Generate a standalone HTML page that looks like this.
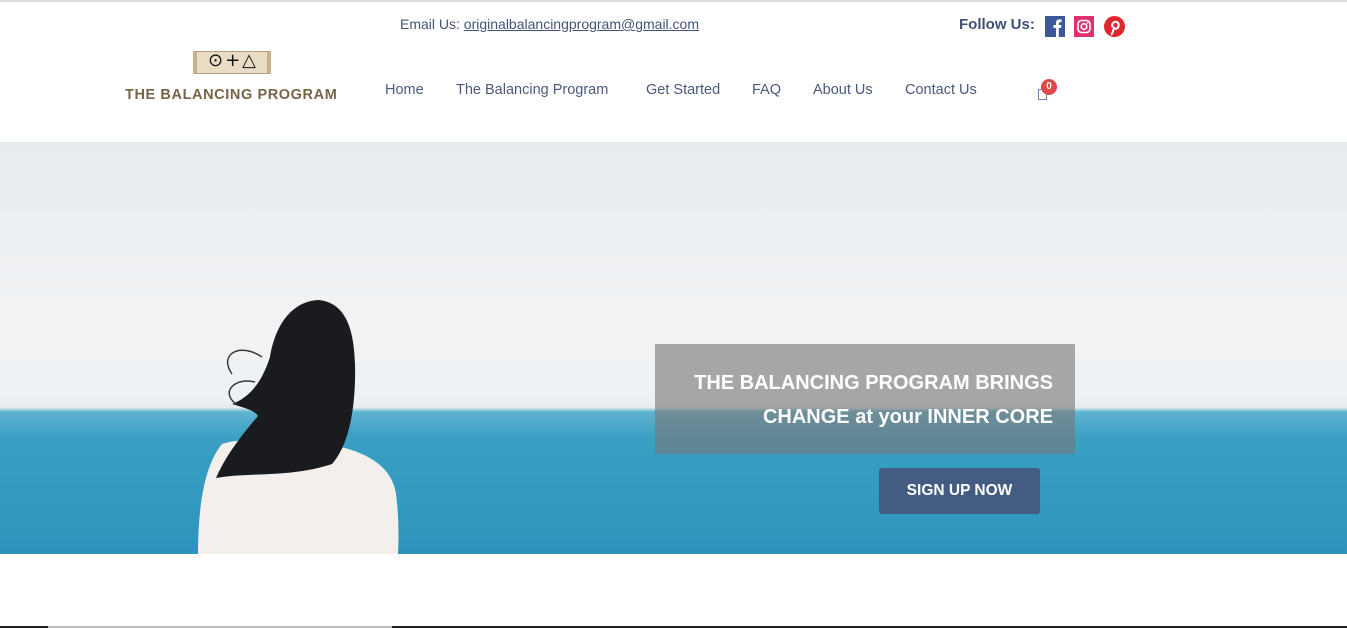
<!DOCTYPE html>
<html><head><meta charset="utf-8"><style>
*{margin:0;padding:0;box-sizing:border-box}
body{width:1347px;height:628px;overflow:hidden;background:#fff;font-family:"Liberation Sans",sans-serif;position:relative}
.a{position:absolute}
.nav{font-size:14.5px;color:#4a5a7c;top:82px;font-weight:300}
</style></head><body>
<div class="a" style="left:0;top:0;width:1347px;height:2px;background:#ddd"></div>
<div class="a" style="left:400px;top:16px;font-size:14px;color:#44557a">Email Us: <span style="text-decoration:underline">originalbalancingprogram@gmail.com</span></div>
<div class="a" style="left:959px;top:16px;font-size:15px;font-weight:bold;color:#3f4f72">Follow Us:</div>
<svg class="a" style="left:1045px;top:16px" width="20" height="21" viewBox="0 0 20 21"><rect width="20" height="21" fill="#3b5998"/><path d="M11 21V12H8.5V9H11V7c0-2.5 1.3-3.6 3.6-3.6H16.5V6.3H15c-.9 0-1.2.4-1.2 1.2V9H16.5L16 12H13.8V21z" fill="#fff"/></svg>
<svg class="a" style="left:1074px;top:16px" width="20" height="21" viewBox="0 0 20 21"><rect width="20" height="21" fill="#e0306f"/><rect x="4" y="4.5" width="12" height="12" rx="3.5" fill="none" stroke="#fff" stroke-width="1.6"/><circle cx="10" cy="10.5" r="2.8" fill="none" stroke="#fff" stroke-width="1.6"/><circle cx="13.6" cy="6.9" r=".8" fill="#fff"/></svg>
<svg class="a" style="left:1104px;top:16px" width="21" height="21" viewBox="0 0 21 21"><circle cx="10.5" cy="10.5" r="10.5" fill="#e0262c"/><path d="M9.6 13c-.5 2.3-1 4.1-2 5.3M8.2 10.5c-.8-3 2-5.3 4.3-4.6 2.6.7 2.8 4.4.9 6.2-1.4 1.3-3.2.6-3.5-.7" fill="none" stroke="#fff" stroke-width="2" stroke-linecap="round"/></svg>
<div class="a" style="left:193px;top:51px;width:78px;height:23px;background:#e9dcc4;border:1px solid #b59d7a;border-left:4px solid #c9b08a;border-right:4px solid #c9b08a"></div>
<div class="a" style="left:198px;top:50px;width:70px;font-size:18px;color:#111;font-family:'DejaVu Sans',sans-serif;text-align:center;letter-spacing:2px">⊙+△</div>
<div class="a" style="left:125px;top:87px;font-size:14.5px;font-weight:bold;color:#766448;letter-spacing:.6px">THE BALANCING PROGRAM</div>
<div class="a nav" style="left:385px">Home</div>
<div class="a nav" style="left:456px">The Balancing Program</div>
<div class="a nav" style="left:646px">Get Started</div>
<div class="a nav" style="left:752px">FAQ</div>
<div class="a nav" style="left:813px">About Us</div>
<div class="a nav" style="left:905px">Contact Us</div>
<div class="a" style="left:1038px;top:89px;width:9px;height:11px;border:1px solid #6688aa"></div>
<div class="a" style="left:1041px;top:79px;width:16px;height:16px;border-radius:50%;background:#e04848;color:#fff;font-size:10px;font-weight:bold;text-align:center;line-height:16px">0</div>
<div class="a" style="left:0;top:142px;width:1347px;height:412px;overflow:hidden;background:linear-gradient(#e8ecef 0%,#f0f2f4 40%,#eff2f4 62%,#e3ebef 64.5%,#5fb3d0 65.5%,#3a9fc3 72%,#2e94bd 100%)">
<svg class="a" style="left:0;top:0" width="1347" height="412">
<path d="M198 412 C198 370 203 325 222 302 C240 296 262 298 300 300 C360 302 392 322 396 352 C400 382 398 412 398 412Z" fill="#f2efec"/>
<path d="M318 158 C290 160 275 185 270 215 C262 240 250 255 232 262 C245 266 254 268 258 274 C240 295 225 315 216 336 C250 330 290 336 332 322 C350 302 356 262 355 222 C354 186 345 160 318 158Z" fill="#1a1b1f"/>
<path d="M262 215 C240 200 218 212 232 232 M255 240 C235 235 220 250 236 262" fill="none" stroke="#3a3a3e" stroke-width="1.5"/>
</svg>
</div>
<div class="a" style="left:655px;top:344px;width:420px;height:110px;background:rgba(120,120,120,.62)"></div>
<div class="a" style="left:655px;top:366px;width:398px;text-align:right;color:#fff;font-size:20px;font-weight:bold;line-height:34px">THE BALANCING PROGRAM BRINGS<br>CHANGE at your INNER CORE</div>
<div class="a" style="left:879px;top:468px;width:161px;height:46px;background:#445c82;border-radius:3px;color:#fff;font-size:15.5px;font-weight:bold;text-align:center;line-height:46px">SIGN UP NOW</div>
<div class="a" style="left:0;top:626px;width:1347px;height:2px;background:#222"></div>
<div class="a" style="left:48px;top:626px;width:344px;height:2px;background:#bbb"></div>
</body></html>
